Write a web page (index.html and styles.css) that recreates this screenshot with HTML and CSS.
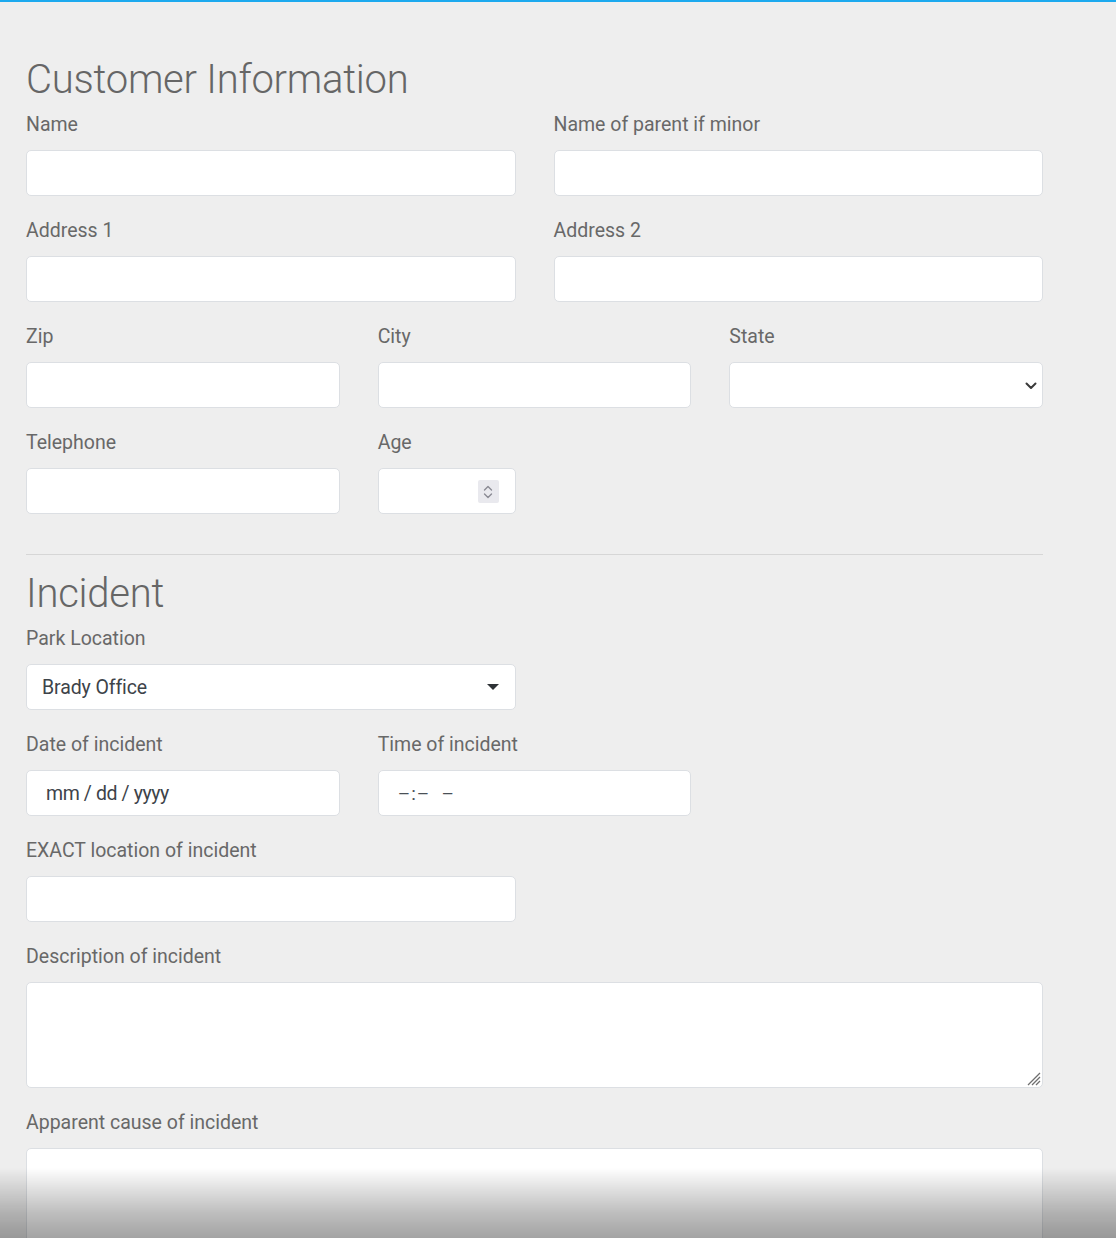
FILE: index.html
```html
<!DOCTYPE html>
<html lang="en">
<head>
<meta charset="utf-8">
<title>Incident Report</title>
<link rel="stylesheet" href="styles.css">
</head>
<body>
<div class="topbar"></div>
<main class="page">
  <h2 class="section-title">Customer Information</h2>
  <div class="grid">
    <div class="field span-6">
      <label class="label">Name</label>
      <input class="control" type="text">
    </div>
    <div class="field span-6">
      <label class="label">Name of parent if minor</label>
      <input class="control" type="text">
    </div>
    <div class="field span-6">
      <label class="label">Address 1</label>
      <input class="control" type="text">
    </div>
    <div class="field span-6">
      <label class="label">Address 2</label>
      <input class="control" type="text">
    </div>
    <div class="field span-4">
      <label class="label">Zip</label>
      <input class="control" type="text">
    </div>
    <div class="field span-4">
      <label class="label">City</label>
      <input class="control" type="text">
    </div>
    <div class="field span-4">
      <label class="label">State</label>
      <div class="control select-native">
        <svg class="chev" width="12" height="8" viewBox="0 0 12 8"><path d="M1.5 1.5 L6 6 L10.5 1.5" fill="none" stroke="#3a3a3a" stroke-width="2" stroke-linecap="round" stroke-linejoin="round"/></svg>
      </div>
    </div>
    <div class="field span-4">
      <label class="label">Telephone</label>
      <input class="control" type="text">
    </div>
    <div class="field span-2">
      <label class="label">Age</label>
      <div class="control number">
        <span class="spinner">
          <svg width="12" height="18" viewBox="0 0 12 18"><path d="M2.5 7 L6 3.5 L9.5 7" fill="none" stroke="#8a8a94" stroke-width="1.4" stroke-linecap="round" stroke-linejoin="round"/><path d="M2.5 11 L6 14.5 L9.5 11" fill="none" stroke="#8a8a94" stroke-width="1.4" stroke-linecap="round" stroke-linejoin="round"/></svg>
        </span>
      </div>
    </div>
  </div>

  <hr class="divider">

  <h2 class="section-title">Incident</h2>
  <div class="grid">
    <div class="field span-6">
      <label class="label">Park Location</label>
      <div class="control select-custom">
        <span class="value">Brady Office</span>
        <span class="caret"></span>
      </div>
    </div>
    <div class="field span-6"></div>
    <div class="field span-4">
      <label class="label">Date of incident</label>
      <div class="control faux-date"><span>mm / dd / yyyy</span></div>
    </div>
    <div class="field span-4">
      <label class="label">Time of incident</label>
      <div class="control faux-time"><span>–:–&nbsp;&nbsp;–</span></div>
    </div>
    <div class="field span-4"></div>
    <div class="field span-6">
      <label class="label">EXACT location of incident</label>
      <input class="control" type="text">
    </div>
    <div class="field span-6"></div>
    <div class="field span-12">
      <label class="label">Description of incident</label>
      <div class="area-wrap">
        <textarea class="control area"></textarea>
        <svg class="grip" width="16" height="16" viewBox="0 0 16 16"><path d="M15 3 L3 15 M15 7 L7 15 M15 11 L11 15" stroke="#6f6f6f" stroke-width="1.3" fill="none"/></svg>
      </div>
    </div>
    <div class="field span-12">
      <label class="label">Apparent cause of incident</label>
      <textarea class="control area"></textarea>
    </div>
  </div>
</main>
<div class="bottom-fade"></div>
</body>
</html>
```

FILE: styles.css
```css
* { box-sizing: border-box; }

html, body {
  margin: 0;
  padding: 0;
  background: #eeeeee;
}

body {
  font-family: Roboto, "Liberation Sans", Arial, sans-serif;
  color: #666666;
}

.topbar {
  height: 2px;
  background: #1ca9ee;
}

.page {
  width: 1017px;
  margin-left: 26px;
  padding-top: 54px;
}

.section-title {
  margin: 0 0 6px 0;
  font-size: 40px;
  line-height: 48px;
  font-weight: 300;
  color: #666666;
  letter-spacing: -0.25px;
}

.grid {
  display: grid;
  grid-template-columns: repeat(12, 1fr);
  column-gap: 38px;
}

.span-2 { grid-column: span 2; }
.span-4 { grid-column: span 4; }
.span-6 { grid-column: span 6; }
.span-12 { grid-column: span 12; }

.field {
  margin-bottom: 20px;
}

.label {
  display: block;
  font-size: 19.5px;
  line-height: 30px;
  margin-bottom: 10px;
  color: #686868;
}

.control {
  display: block;
  width: 100%;
  height: 46px;
  margin: 0;
  padding: 0 16px;
  background: #ffffff;
  border: 1px solid #dcdfe3;
  border-radius: 5px;
  font-family: Roboto, "Liberation Sans", Arial, sans-serif;
  font-size: 19.5px;
  color: #3d4349;
  outline: none;
}

.select-native {
  position: relative;
}

.chev {
  position: absolute;
  right: 5px;
  top: 19px;
}

.number {
  position: relative;
}

.spinner {
  position: absolute;
  right: 16px;
  top: 11px;
  width: 21px;
  height: 23px;
  background: #e9e9ee;
  border-radius: 2px;
  display: flex;
  align-items: center;
  justify-content: center;
}

.select-custom {
  display: flex;
  align-items: center;
  justify-content: space-between;
  padding: 0 16px 0 15px;
}

.select-custom .value {
  font-size: 19.5px;
  color: #3d4349;
  letter-spacing: -0.1px;
}

.caret {
  width: 0;
  height: 0;
  border-left: 6px solid transparent;
  border-right: 6px solid transparent;
  border-top: 6px solid #2e3236;
}

.faux-date,
.faux-time {
  display: flex;
  align-items: center;
  padding-left: 19px;
  color: #3d4349;
}

.faux-date span {
  font-size: 19.5px;
  letter-spacing: -0.4px;
}

.faux-time span {
  font-size: 19px;
  letter-spacing: 1px;
  color: #4a5056;
}

.area-wrap {
  position: relative;
}

.area {
  height: 106px;
  padding: 8px 16px;
  resize: none;
}

.grip {
  position: absolute;
  right: 2px;
  bottom: 2px;
}

.divider {
  border: 0;
  border-top: 1px solid #d6d6d6;
  margin: 20px 0 15px 0;
  padding: 0;
  height: 0;
}

.bottom-fade {
  position: fixed;
  left: 0;
  right: 0;
  bottom: 0;
  height: 70px;
  pointer-events: none;
  background: linear-gradient(to bottom,
    rgba(0, 0, 0, 0) 0%,
    rgba(0, 0, 0, 0.12) 30%,
    rgba(0, 0, 0, 0.26) 65%,
    rgba(0, 0, 0, 0.36) 100%);
}
```
